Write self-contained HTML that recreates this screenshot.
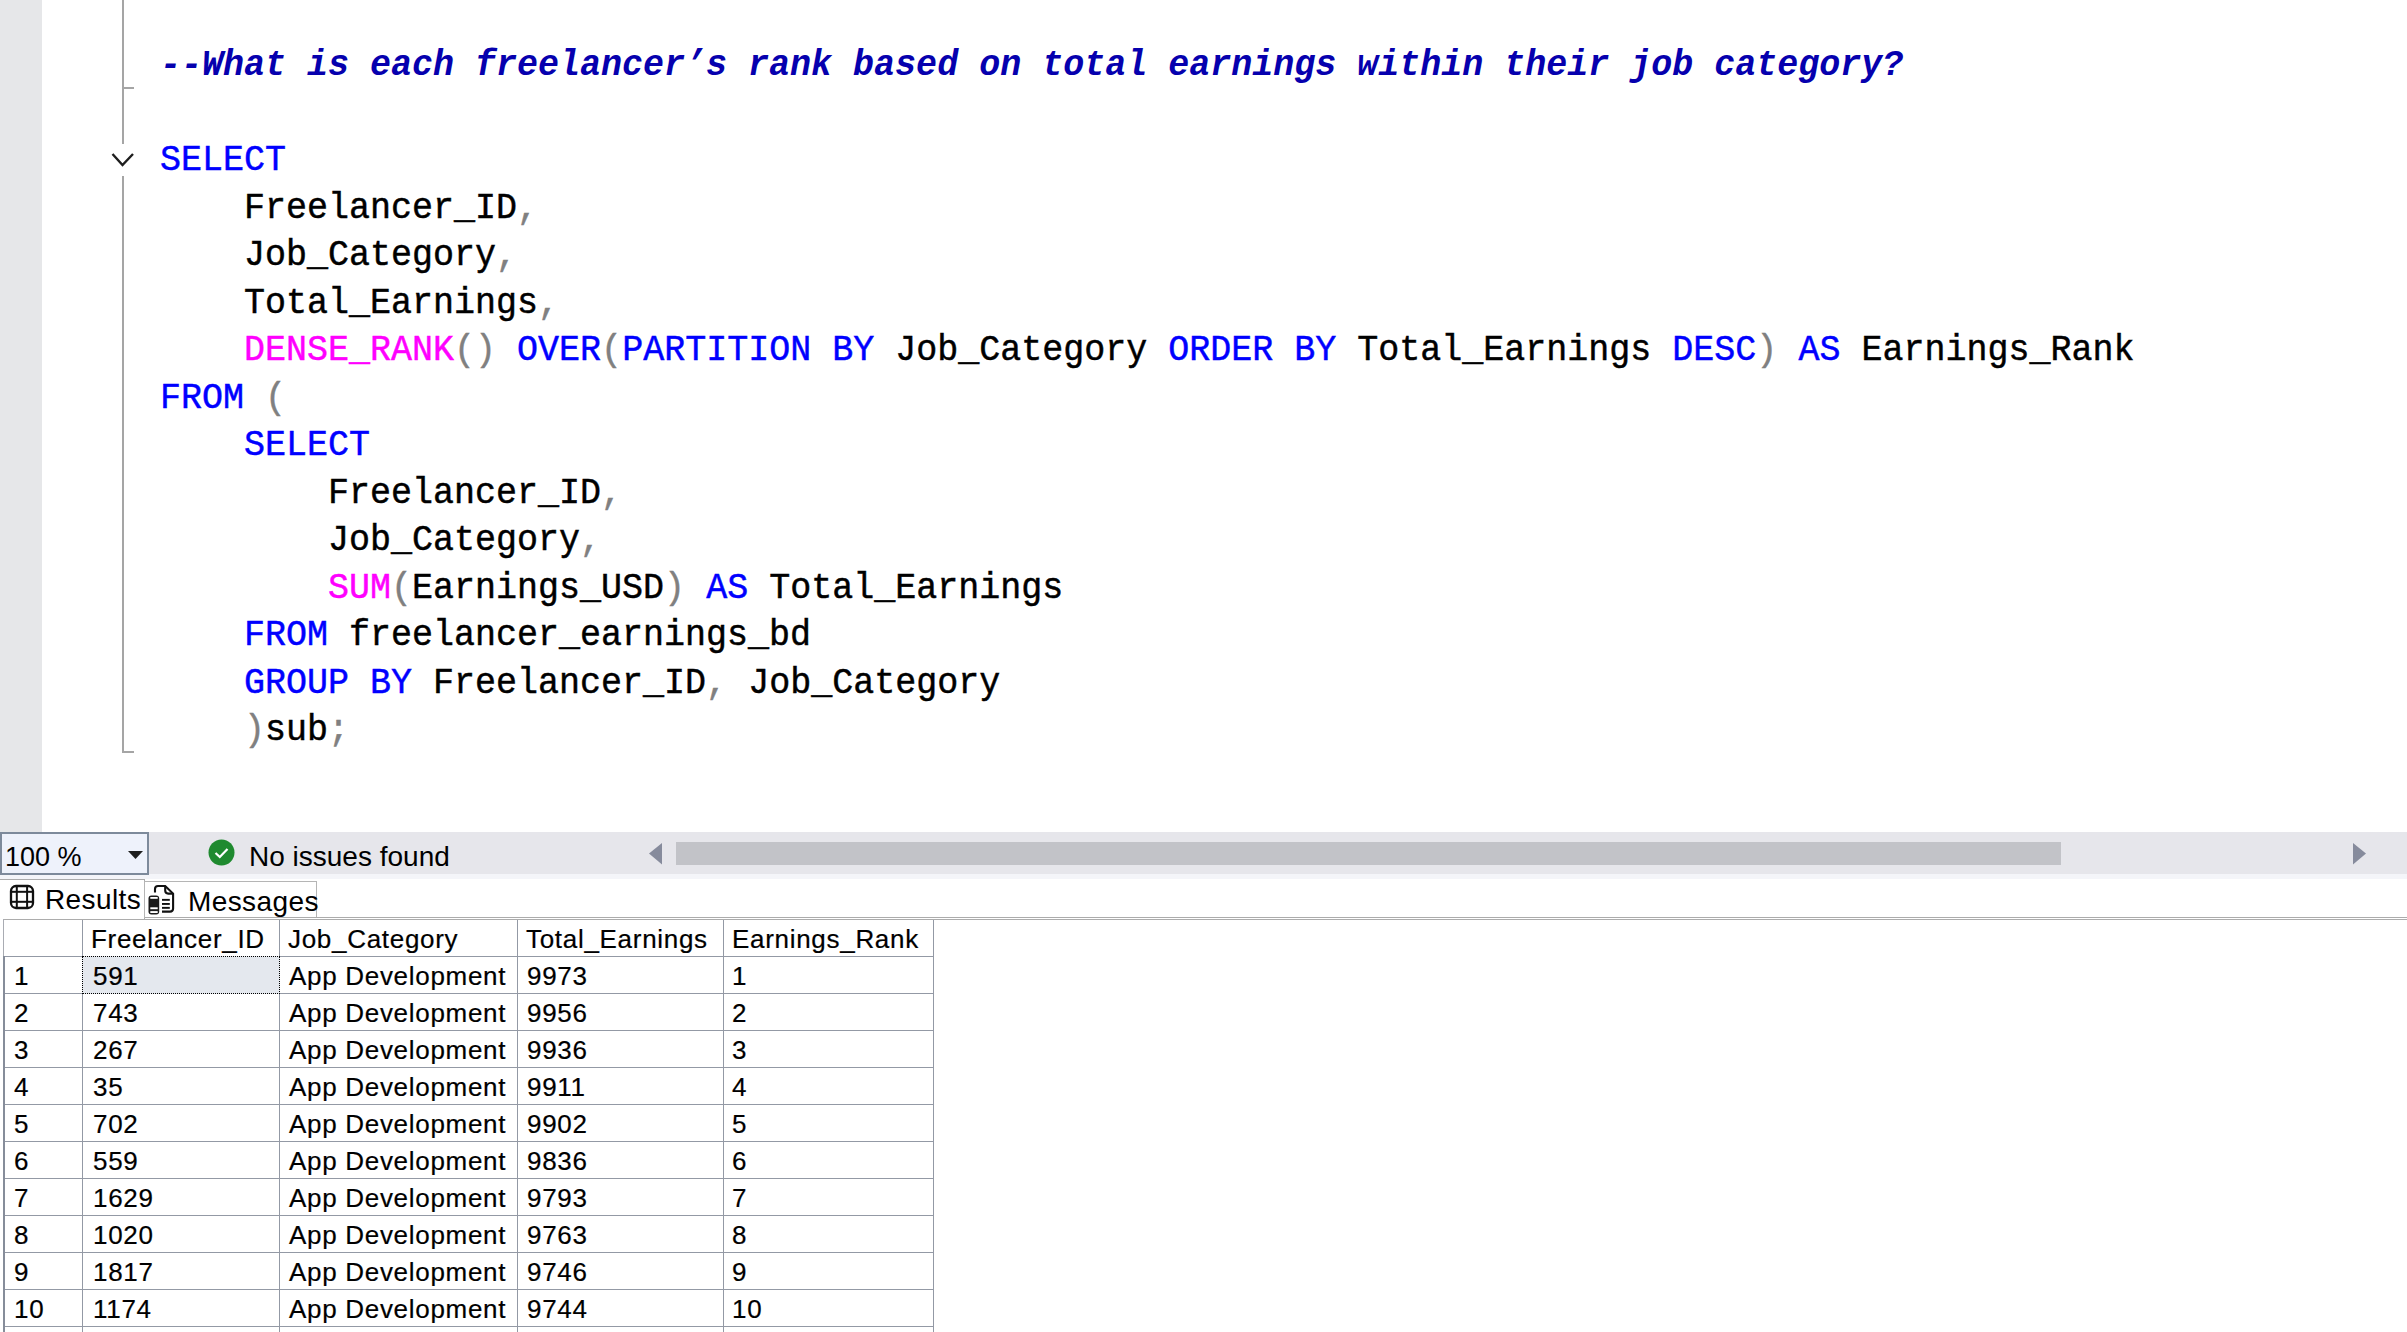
<!DOCTYPE html>
<html><head><meta charset="utf-8">
<style>
*{margin:0;padding:0;box-sizing:border-box}
html,body{width:2407px;height:1332px;overflow:hidden;background:#fff}
body{position:relative;font-family:"Liberation Sans",sans-serif}
.abs{position:absolute}
#margin{left:0;top:0;width:42px;height:832px;background:#e6e7e9}
.cl{position:absolute;left:160px;height:40px;font-family:"Liberation Mono",monospace;font-size:35px;line-height:40px;white-space:pre;color:#000;transform-origin:0 29px;transform:scaleY(1.04);-webkit-text-stroke:0.45px currentColor}
.c{-webkit-text-stroke:0}
.k{color:#0000ff}.f{color:#ff00ff}.p{color:#808080}
.c{color:#0600ae;font-weight:bold;font-style:italic}
.gl{background:#a5a5a5}
#status{left:0;top:832px;width:2407px;height:42px;background:#e6e6eb}
#strip{left:0;top:874px;width:2407px;height:5px;background:#f4f5f9}
#zoom{left:0;top:832px;width:149px;height:43px;border:2px solid #7d8a9b;background:#eef2fb}
#zoomtxt{left:3px;top:7px;font-size:27px;line-height:32px;color:#000}
#noissues{left:249px;top:841px;font-size:28px;line-height:32px;color:#000}
.cell{position:absolute;font-size:26px;letter-spacing:0.7px;line-height:37px;color:#000;white-space:pre;-webkit-text-stroke:0.2px #000}
.tab{position:absolute;font-size:28px;line-height:32px;color:#000;letter-spacing:0.4px}
</style></head><body>
<div id="margin" class="abs"></div>
<div class="abs gl" style="left:122px;top:0;width:2px;height:144px"></div>
<div class="abs gl" style="left:122px;top:87px;width:12px;height:2px"></div>
<svg class="abs" style="left:110px;top:150px" width="26" height="20" viewBox="0 0 26 20"><polyline points="2.5,4 12.5,15 23,4" fill="none" stroke="#1e1e1e" stroke-width="2.4"/></svg>
<div class="abs gl" style="left:122px;top:176px;width:2px;height:577px"></div>
<div class="abs gl" style="left:122px;top:751px;width:12px;height:2px"></div>
<div class="cl" style="top:46.00px"><span class="c">--What is each freelancer’s rank based on total earnings within their job category?</span></div>
<div class="cl" style="top:141.00px"><span class="k">SELECT</span></div>
<div class="cl" style="top:188.50px">    Freelancer_ID<span class="p">,</span></div>
<div class="cl" style="top:236.00px">    Job_Category<span class="p">,</span></div>
<div class="cl" style="top:283.50px">    Total_Earnings<span class="p">,</span></div>
<div class="cl" style="top:331.00px">    <span class="f">DENSE_RANK</span><span class="p">()</span> <span class="k">OVER</span><span class="p">(</span><span class="k">PARTITION BY</span> Job_Category <span class="k">ORDER BY</span> Total_Earnings <span class="k">DESC</span><span class="p">)</span> <span class="k">AS</span> Earnings_Rank</div>
<div class="cl" style="top:378.50px"><span class="k">FROM</span> <span class="p">(</span></div>
<div class="cl" style="top:426.00px">    <span class="k">SELECT</span></div>
<div class="cl" style="top:473.50px">        Freelancer_ID<span class="p">,</span></div>
<div class="cl" style="top:521.00px">        Job_Category<span class="p">,</span></div>
<div class="cl" style="top:568.50px">        <span class="f">SUM</span><span class="p">(</span>Earnings_USD<span class="p">)</span> <span class="k">AS</span> Total_Earnings</div>
<div class="cl" style="top:616.00px">    <span class="k">FROM</span> freelancer_earnings_bd</div>
<div class="cl" style="top:663.50px">    <span class="k">GROUP BY</span> Freelancer_ID<span class="p">,</span> Job_Category</div>
<div class="cl" style="top:711.00px">    <span class="p">)</span>sub<span class="p">;</span></div>
<div id="status" class="abs"></div>
<div id="strip" class="abs"></div>
<div id="zoom" class="abs"><div id="zoomtxt" class="abs">100 %</div>
<svg class="abs" style="left:125px;top:16px" width="17" height="10"><polygon points="1,1 16,1 8.5,9" fill="#1e1e1e"/></svg></div>
<svg class="abs" style="left:208px;top:839px" width="27" height="27"><circle cx="13.5" cy="13.5" r="13" fill="#1f8a2f"/><polyline points="7.5,14 11.8,18 19.5,10" fill="none" stroke="#fff" stroke-width="2.2"/></svg>
<div id="noissues" class="abs">No issues found</div>
<svg class="abs" style="left:648px;top:842px" width="16" height="24"><polygon points="1,11.5 14,1 14,22.5" fill="#868b9c"/></svg>
<div class="abs" style="left:676px;top:842px;width:1385px;height:23px;background:#c2c3c8"></div>
<svg class="abs" style="left:2352px;top:842px" width="16" height="24"><polygon points="14,11.5 1,1 1,22.5" fill="#868b9c"/></svg>
<div class="abs" style="left:0;top:879px;width:145px;height:41px;background:#fff;border-top:1px solid #ababab;border-right:1px solid #ababab"></div>
<div class="abs" style="left:144px;top:881px;width:173px;height:37px;background:#fff;border:1px solid #b5b5b5"></div>
<div class="abs" style="left:145px;top:917px;width:2262px;height:1px;background:#acacac"></div>
<div class="abs" style="left:3px;top:919px;width:2404px;height:1px;background:#acacac"></div>
<svg class="abs" style="left:9px;top:884px" width="28" height="28" viewBox="0 0 28 28"><rect x="2" y="2" width="22" height="22" rx="5" fill="none" stroke="#111" stroke-width="2.3"/><line x1="7.8" y1="2" x2="7.8" y2="24" stroke="#111" stroke-width="2"/><line x1="18.1" y1="2" x2="18.1" y2="24" stroke="#111" stroke-width="2"/><line x1="2" y1="7.8" x2="24" y2="7.8" stroke="#111" stroke-width="2"/><line x1="2" y1="17.8" x2="24" y2="17.8" stroke="#111" stroke-width="2"/></svg>
<div class="tab" style="left:45px;top:884px">Results</div>
<svg class="abs" style="left:146px;top:883px" width="32" height="34" viewBox="0 0 32 34"><path d="M9 9.5 V6 Q9 3 12 3 H19.2 L27.1 10.6 V25.5 Q27.1 28.6 24 28.6 H16" fill="none" stroke="#111" stroke-width="2.1"/><path d="M19.2 3 V7.6 Q19.2 10.6 22.2 10.6 H27.1" fill="none" stroke="#111" stroke-width="2.1"/><rect x="16" y="15.9" width="7.8" height="1.9" fill="#111"/><rect x="16" y="20" width="7.8" height="1.9" fill="#111"/><rect x="16" y="23.9" width="7.8" height="1.9" fill="#111"/><rect x="2.5" y="12.5" width="10.7" height="19.1" rx="3" fill="#1a1a1a"/><rect x="4.3" y="14" width="7.4" height="1.8" fill="#fff"/><rect x="4.3" y="24.3" width="7.4" height="1.9" fill="#fff"/><rect x="4.3" y="28.1" width="7.4" height="1.9" fill="#fff"/></svg>
<div class="tab" style="left:188px;top:886px">Messages</div>
<div class="abs" style="left:4px;top:956px;width:930px;height:1px;background:#9399a5"></div>
<div class="abs" style="left:4px;top:993px;width:930px;height:1px;background:#9399a5"></div>
<div class="abs" style="left:4px;top:1030px;width:930px;height:1px;background:#9399a5"></div>
<div class="abs" style="left:4px;top:1067px;width:930px;height:1px;background:#9399a5"></div>
<div class="abs" style="left:4px;top:1104px;width:930px;height:1px;background:#9399a5"></div>
<div class="abs" style="left:4px;top:1141px;width:930px;height:1px;background:#9399a5"></div>
<div class="abs" style="left:4px;top:1178px;width:930px;height:1px;background:#9399a5"></div>
<div class="abs" style="left:4px;top:1215px;width:930px;height:1px;background:#9399a5"></div>
<div class="abs" style="left:4px;top:1252px;width:930px;height:1px;background:#9399a5"></div>
<div class="abs" style="left:4px;top:1289px;width:930px;height:1px;background:#9399a5"></div>
<div class="abs" style="left:4px;top:1326px;width:930px;height:1px;background:#9399a5"></div>
<div class="abs" style="left:3px;top:919px;width:1px;height:37px;background:#a9acb3"></div>
<div class="abs" style="left:3px;top:956px;width:2px;height:376px;background:#868d9a"></div>
<div class="abs" style="left:82px;top:920px;width:1px;height:413px;background:#9399a5"></div>
<div class="abs" style="left:279px;top:920px;width:1px;height:413px;background:#9399a5"></div>
<div class="abs" style="left:517px;top:920px;width:1px;height:413px;background:#9399a5"></div>
<div class="abs" style="left:723px;top:920px;width:1px;height:413px;background:#9399a5"></div>
<div class="abs" style="left:933px;top:920px;width:1px;height:413px;background:#9399a5"></div>
<div class="abs" style="left:82px;top:956px;width:198px;height:38px;background:#e4e8ee;border:1px dotted #000"></div>
<div class="cell" style="left:91px;top:921px">Freelancer_ID</div>
<div class="cell" style="left:288px;top:921px">Job_Category</div>
<div class="cell" style="left:526px;top:921px">Total_Earnings</div>
<div class="cell" style="left:732px;top:921px">Earnings_Rank</div>
<div class="cell" style="left:14px;top:958px">1</div>
<div class="cell" style="left:93px;top:958px">591</div>
<div class="cell" style="left:289px;top:958px">App Development</div>
<div class="cell" style="left:527px;top:958px">9973</div>
<div class="cell" style="left:732px;top:958px">1</div>
<div class="cell" style="left:14px;top:995px">2</div>
<div class="cell" style="left:93px;top:995px">743</div>
<div class="cell" style="left:289px;top:995px">App Development</div>
<div class="cell" style="left:527px;top:995px">9956</div>
<div class="cell" style="left:732px;top:995px">2</div>
<div class="cell" style="left:14px;top:1032px">3</div>
<div class="cell" style="left:93px;top:1032px">267</div>
<div class="cell" style="left:289px;top:1032px">App Development</div>
<div class="cell" style="left:527px;top:1032px">9936</div>
<div class="cell" style="left:732px;top:1032px">3</div>
<div class="cell" style="left:14px;top:1069px">4</div>
<div class="cell" style="left:93px;top:1069px">35</div>
<div class="cell" style="left:289px;top:1069px">App Development</div>
<div class="cell" style="left:527px;top:1069px">9911</div>
<div class="cell" style="left:732px;top:1069px">4</div>
<div class="cell" style="left:14px;top:1106px">5</div>
<div class="cell" style="left:93px;top:1106px">702</div>
<div class="cell" style="left:289px;top:1106px">App Development</div>
<div class="cell" style="left:527px;top:1106px">9902</div>
<div class="cell" style="left:732px;top:1106px">5</div>
<div class="cell" style="left:14px;top:1143px">6</div>
<div class="cell" style="left:93px;top:1143px">559</div>
<div class="cell" style="left:289px;top:1143px">App Development</div>
<div class="cell" style="left:527px;top:1143px">9836</div>
<div class="cell" style="left:732px;top:1143px">6</div>
<div class="cell" style="left:14px;top:1180px">7</div>
<div class="cell" style="left:93px;top:1180px">1629</div>
<div class="cell" style="left:289px;top:1180px">App Development</div>
<div class="cell" style="left:527px;top:1180px">9793</div>
<div class="cell" style="left:732px;top:1180px">7</div>
<div class="cell" style="left:14px;top:1217px">8</div>
<div class="cell" style="left:93px;top:1217px">1020</div>
<div class="cell" style="left:289px;top:1217px">App Development</div>
<div class="cell" style="left:527px;top:1217px">9763</div>
<div class="cell" style="left:732px;top:1217px">8</div>
<div class="cell" style="left:14px;top:1254px">9</div>
<div class="cell" style="left:93px;top:1254px">1817</div>
<div class="cell" style="left:289px;top:1254px">App Development</div>
<div class="cell" style="left:527px;top:1254px">9746</div>
<div class="cell" style="left:732px;top:1254px">9</div>
<div class="cell" style="left:14px;top:1291px">10</div>
<div class="cell" style="left:93px;top:1291px">1174</div>
<div class="cell" style="left:289px;top:1291px">App Development</div>
<div class="cell" style="left:527px;top:1291px">9744</div>
<div class="cell" style="left:732px;top:1291px">10</div>
</body></html>
